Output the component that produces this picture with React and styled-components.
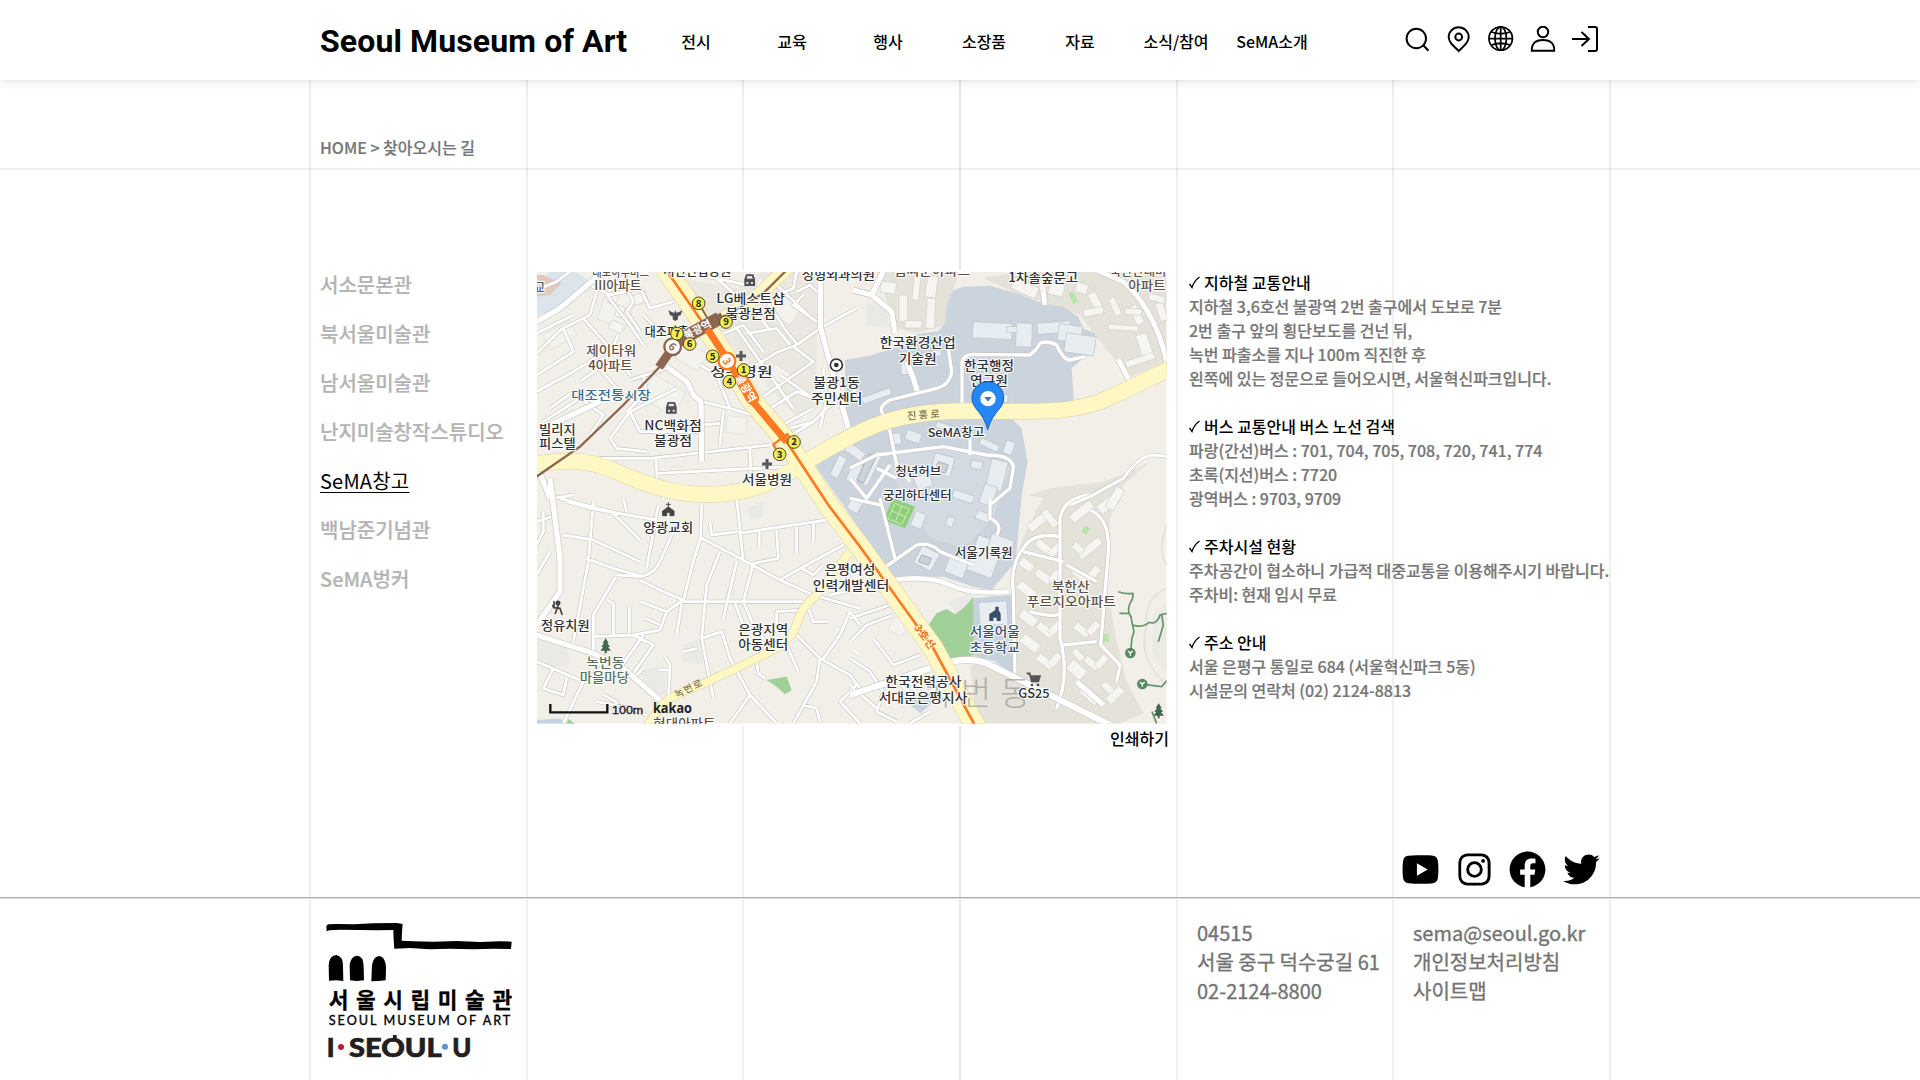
import React from "react";
import styled, { createGlobalStyle } from "styled-components";
import { RiYoutubeFill, RiFacebookCircleFill, RiTwitterFill } from "react-icons/ri";
import { BiLogoInstagram } from "react-icons/bi";

const kr = `"Noto Sans CJK KR", "Noto Sans", sans-serif`;

const GlobalStyle = createGlobalStyle`
  *, *::before, *::after { box-sizing: border-box; }
  body { margin: 0; background: #fff; font-family: ${kr}; font-weight: 500; color: #000; }
  ul, p, h1, h2 { margin: 0; padding: 0; list-style: none; font-weight: inherit; }
  a { color: inherit; text-decoration: none; }
`;

const rule = (c) => `linear-gradient(${c}, ${c})`;
const offsets = [0, 217, 433, 650, 867, 1083, 1300];

const Page = styled.div`
  display: flex;
  flex-direction: column;
  width: 100%;
  height: 1080px;
  overflow: hidden;
  background-image: ${offsets.map((o) => rule(o === 650 ? "#e6e6e6" : "#efefef")).join(",")};
  background-size: 2px 100%;
  background-repeat: no-repeat;
  background-position: ${offsets.map((o) => `calc(50vw - 651px + ${o}px) 0`).join(",")};
`;

const Container = styled.div`
  display: flex;
  width: 1300px;
  margin: 0 auto;
`;

const Header = styled.header`
  height: 80px;
  flex: none;
  background: #fff;
  box-shadow: 0 0 10px rgba(0, 0, 0, 0.16);
`;

const HeaderInner = styled(Container)`
  height: 80px;
  padding: 0 11px 0 10px;
  align-items: center;
`;

const Brand = styled.h1`
  width: 328px;
  padding-top: 2px;
  font: 700 32px/40px Roboto, sans-serif;
  letter-spacing: 0.12px;
  white-space: nowrap;
`;

const Nav = styled.nav`
  display: grid;
  grid-template-columns: repeat(7, 96px);
  padding-top: 1px;
`;

const NavLink = styled.a`
  text-align: center;
  font-size: 16px;
  line-height: 24px;
  white-space: nowrap;
`;

const Tools = styled.div`
  display: flex;
  gap: 14px;
  margin-left: auto;
  align-items: center;
`;

const ToolIcon = styled.svg`
  display: block;
  width: 28px;
  height: 28px;
  fill: none;
  stroke: #000;
  stroke-width: ${(p) => p.$line || 2};
`;

const CrumbBar = styled.div`
  flex: none;
  height: 90px;
  border-bottom: 2px solid rgba(0, 0, 0, 0.063);
`;

const Crumb = styled(Container)`
  padding: 55px 10px 0;
  font-size: 16px;
  line-height: 24px;
  color: #777;
  -webkit-text-stroke: 0.2px #777;
`;

const Main = styled(Container)`
  flex: none;
  height: 727px;
  padding-top: 100px;
`;

const SideList = styled.ul`
  flex: none;
  width: 227px;
  padding-left: 10px;
`;

const SideItem = styled.li`
  height: 49px;
  font-size: 20px;
  line-height: 30px;
  white-space: nowrap;
  color: ${(p) => (p.$active ? "#000" : "#b4b4b4")};
  font-weight: ${(p) => (p.$active ? 400 : 500)};
  letter-spacing: ${(p) => (p.$active ? "0.2px" : "0")};
  -webkit-text-stroke: ${(p) => (p.$active ? "0" : "0.2px #b4b4b4")};
  text-decoration: ${(p) => (p.$active ? "underline" : "none")};
  text-decoration-thickness: 1px;
  text-underline-offset: 3px;
`;

const MapColumn = styled.div`
  display: flex;
  flex: none;
  flex-direction: column;
  width: 632px;
`;

const MapImage = styled.svg`
  display: block;
  width: 631px;
  height: 456px;
  background: #fff;
`;

const PrintLink = styled.a`
  align-self: flex-end;
  font-size: 16px;
  line-height: 24px;
`;

const Info = styled.div`
  display: flex;
  flex-direction: column;
  gap: 24px;
  padding-left: 20px;
  font-size: 16px;
  line-height: 24px;
  white-space: nowrap;
  color: #777;
`;

const InfoLine = styled.p`
  -webkit-text-stroke: 0.2px #777;
`;

const InfoTitle = styled.h2`
  display: flex;
  align-items: center;
  font-size: 16px;
  color: #000;
`;

const Tick = styled.svg`
  width: 11px;
  height: 13px;
  margin-right: 4px;
  fill: none;
  stroke: #000;
  stroke-width: 1.3;
`;

const SocialRow = styled(Container)`
  margin-top: -51px;
  height: 51px;
  flex: none;
  justify-content: flex-end;
  align-items: center;
  gap: 10.7px;
  padding: 0 7px 5px 0;
`;

const Footer = styled.footer`
  flex: 1;
  border-top: 1px solid #a9a9a9;
  box-shadow: inset 0 1px 0 #e2e2e2;
`;

const FooterInner = styled(Container)`
  padding-top: 20px;
`;

const LogoCell = styled.div`
  flex: none;
  width: 887px;
  padding: 2px 0 0 15px;
`;

const Logo = styled.svg`
  display: block;
  width: 190px;
  height: 140px;
`;

const FooterText = styled.div`
  flex: none;
  width: 216px;
  font-size: 20px;
  font-weight: 400;
  line-height: 29px;
  color: #747474;
  -webkit-text-stroke: 0.35px #747474;
  white-space: nowrap;
`;

/* ---------- map ---------- */

const AREA = {
  base: "#f2efe9",
  campus: "#cbd4dc",
  estate: "#e4e2d9",
  tower: "#f6f5f1",
  hall: "#e8edf2",
};

function Roads({ d, w = 9, edge = 3.5 }) {
  return (
    <g fill="none" strokeLinejoin="round">
      <path d={d} stroke="#c6c4c1" strokeWidth={w + edge} />
      <path d={d} stroke="#fff" strokeWidth={w} />
    </g>
  );
}

function YellowRoad({ d, w }) {
  return (
    <g fill="none">
      <path d={d} stroke="#d9cfa0" strokeWidth={w + 3} />
      <path d={d} stroke="#fff8c4" strokeWidth={w} />
    </g>
  );
}

const narrowRoads = `
M20 75L80 50L120 20 M20 265L95 192L180 150L200 80 M20 205L70 180L130 150 M100 190L130 260L20 330 M20 380L130 320L260 240
M230 90L300 180L340 240 M160 160L240 250L300 330 M180 60L240 90L330 70L360 130L430 110 M340 150L400 210 M300 345L410 310 M210 20L250 60L300 20
M285 60L310 110L290 140L330 200 M265 210L220 300L150 350 M60 430L130 380L190 410L290 380 M200 300L260 370 M290 440L350 380L340 330
M240 520L300 440L330 500L510 500 M515 410L600 430L685 455 M600 430L580 380L560 330L510 300 M580 440L570 540 M515 480L570 475 M240 520L260 550L350 560
M120 600L210 580L360 580L720 540 M378 580L382 655 M660 548L662 625 M385 625L520 618L780 605 M300 440L440 370 M40 650L70 700L130 690 M40 470L150 400L220 450L180 510
M750 530L850 470L890 430L985 370 M690 450L800 380L880 410 M650 320L740 262L800 240 M800 240L870 190L980 130 M780 240L740 190L650 205 M790 245L850 290L700 395
M690 75L770 200L800 235 M740 60L850 165 M640 100L720 195 M800 80L840 60L870 90 M570 210L640 180L700 260 M620 190L790 430 M820 90L790 120L860 170 M880 310L890 400L870 490
M750 330L850 400 M450 20L560 40L650 60L670 20 M560 40L640 110 M800 20L790 70L740 90 M720 500L850 430 M780 490L850 470
M20 770L80 750 M110 710L180 730L380 765 M100 810L190 825L330 890 M190 710L175 890 M90 700L260 745 M280 700L290 740 M240 735L330 825 M170 880L250 910L340 935
M385 720L350 910 M425 810L390 890Q370 930 330 935L260 930 M20 840L40 800L40 740 M20 930L60 860 M175 890L130 1130 M258 935L190 1050L190 1160 M230 1005L250 1015L250 1110
M298 1025L298 1105 M190 1115L310 1110L390 1095L410 1040L460 1005 M330 945L400 980L460 1005 M330 1010L410 1040 M345 1060L390 1080 M310 1110L370 1140L300 1240 M340 1110L270 1210
M515 720L512 820Q490 880 460 1010 M515 820L630 880L750 945L850 990L990 1030 M620 700L640 890 M625 805L890 765 M740 795L745 880L670 895 M688 800L688 845 M800 785L800 865 M850 775L850 830
M540 770L545 810L625 800 M750 945L820 905L940 840 M815 910L850 930L880 900 M460 1010L820 1010 M570 860L530 960L515 1120L550 1300 M620 890L580 1060 M670 895L640 1010L670 1080L700 1120
M455 1015L440 1110 M615 1015L640 1080 M515 1120L575 1100L600 1180L660 1290L740 1375 M460 1160L500 1150 M740 1100L740 1040L820 1035 M835 1030L850 1070L895 1070 M770 1140L805 1220
M680 1190L685 1225L705 1240 M800 1110L870 1180L960 1230L990 1270 M870 1180L860 1250L790 1375 M660 1290L600 1375 M960 1040L930 1110L880 1180 M960 1040L990 1080 M900 990L990 970 M970 1155L990 1170
M820 1320L860 1330L870 1370 M980 1260L930 1310L990 1375 M20 1190L160 1250L100 1375 M70 1210L40 1270L100 1290L110 1240 M160 1250L240 1190L310 1240L400 1310 M290 1210L310 1240
M405 1175L420 1200L415 1300 M385 1215L420 1215 M310 1240L340 1210 M200 1310L300 1330L350 1350 M220 1290L260 1310L250 1350
M960 1060L1080 1020L1120 1010 M960 1130L1010 1080L1090 1050 M1030 1120L1090 1200L1170 1170 M960 1180L1020 1220L1060 1280L1040 1340L1100 1370
M1200 1340L1140 1375 M960 1260L1040 1330 M1100 1250L1160 1300L1240 1260`;

const wideRoads = `
M20 170L90 130L220 20 M410 305L470 350L490 390L513 410L515 590 M20 500L210 410
M870 20L872 190L905 310L955 490 M970 75L1025 90L1085 140L1095 205 M1025 90L1060 20
M60 640L90 880L90 980L20 1080 M20 600L60 700 M20 1110L190 1165L280 1210L400 1315
M1130 290L1150 340L1165 390 M1640 1250L1720 1320`;

const campusRoads = `
M1255 250L1265 320Q1260 360 1220 370L1080 405Q1050 420 1055 440L1080 500L1100 600L1140 650 M1296 425L1296 290Q1300 270 1330 268L1500 270Q1520 255 1530 235Q1550 225 1580 240Q1600 285 1620 285L1665 275
M960 610L1040 570L1240 545L1370 570Q1450 570 1450 610L1440 670L1380 720 M1080 600L1010 700L960 640 M1320 500L1320 570 M1100 640L1040 610 M1050 700L1095 880 M960 700L1050 720
M1060 910L1160 840Q1200 830 1230 860L1330 900 M1380 700L1380 760Q1420 780 1400 810`;

const estateRoads = `
M1580 1330Q1620 1230 1590 1120L1590 760Q1600 700 1680 690 M1590 815Q1510 800 1480 850Q1440 900 1450 980L1455 1230 M1680 735Q1740 760 1735 860L1712 1140L1770 1200L1760 1250
M1500 1040Q1570 1060 1590 1045 M1600 1140L1700 1130 M1480 860L1600 890 M1610 900L1700 950`;

const towers = [
  [1525, 770, 70, 26, -38], [1560, 760, 60, 22, 50], [1655, 740, 78, 28, -38], [1735, 715, 70, 30, -38], [1540, 845, 50, 24, 38], [1575, 855, 45, 22, -45],
  [1680, 850, 80, 24, -38], [1645, 850, 36, 22, 40], [1490, 900, 44, 26, 38], [1540, 935, 52, 24, 38], [1575, 935, 40, 24, -48], [1490, 975, 60, 28, 38],
  [1650, 930, 50, 24, 38], [1690, 925, 46, 24, -50], [1495, 1060, 56, 30, 38], [1545, 1095, 54, 24, 38], [1575, 1090, 44, 22, -48], [1500, 1135, 60, 30, 38],
  [1545, 1190, 54, 24, 38], [1575, 1185, 44, 22, -48], [1655, 1095, 50, 24, 38], [1690, 1090, 44, 22, -48], [1640, 1215, 56, 36, 42], [1645, 1170, 40, 20, 50],
  [1685, 1195, 50, 22, 38], [1715, 1190, 44, 22, -48], [1680, 1290, 64, 30, 42], [1735, 1270, 44, 20, 42], [1755, 1290, 56, 26, -45],
  [1075, 68, 46, 34, 8], [1120, 130, 26, 80, 0], [1205, 65, 32, 65, 8], [1160, 60, 20, 90, 5], [1202, 145, 26, 90, 3], [1150, 178, 50, 22, 0], [1485, 70, 80, 34, 24],
  [1540, 80, 20, 70, -8], [1580, 70, 46, 44, 12], [1655, 70, 36, 30, 15], [1700, 115, 26, 70, -28], [1690, 140, 60, 22, -10], [1755, 125, 20, 56, -24], [1780, 188, 90, 16, 4],
  [1820, 150, 24, 60, -26], [1810, 140, 50, 18, 5], [1845, 245, 34, 80, -18], [1830, 285, 90, 20, -18], [1895, 140, 24, 56, -20], [1880, 100, 50, 20, 15], [1755, 700, 28, 70, 30],
  [250, 100, 24, 34, 20], [270, 140, 24, 34, 20], [260, 185, 40, 28, 25], [330, 100, 44, 30, -20],
];

const halls = [
  [1387, 197, 118, 48, 3], [1482, 210, 48, 72, 2], [1446, 194, 30, 18, 0], [1572, 188, 100, 34, -4], [1620, 205, 70, 50, 8], [1650, 238, 90, 58, 8], [1040, 393, 90, 20, -20], [1128, 308, 30, 40, 0],
  [1220, 265, 30, 16, 0], [1425, 400, 18, 24, 0], [975, 560, 60, 28, 35], [1025, 610, 22, 110, 26], [975, 625, 34, 60, 26], [1095, 522, 36, 34, -8], [1150, 515, 46, 30, 20], [1250, 488, 66, 18, 18],
  [1378, 540, 60, 20, 25], [1437, 548, 28, 40, 20], [1238, 600, 60, 60, 14], [1180, 650, 50, 40, -20], [1400, 630, 50, 90, 14], [1340, 600, 34, 24, 10], [1300, 695, 64, 24, 18], [1375, 690, 40, 60, 18],
  [1165, 765, 34, 46, 22], [1260, 770, 22, 28, 20], [1360, 755, 44, 26, 22], [1190, 880, 58, 58, 28], [1280, 905, 60, 54, 22], [1365, 875, 80, 110, 20], [1410, 845, 70, 60, 20], [1390, 1045, 84, 70, -3],
  [925, 605, 26, 66, 25], [975, 720, 36, 40, 30], [935, 545, 26, 22, 25],
];

const blocks = [
  [260, 130, 90, 100, 20], [480, 270, 90, 60, 30], [400, 390, 110, 80, 30], [620, 480, 60, 50, 5], [760, 130, 90, 60, 35], [440, 615, 36, 18, -5], [600, 990, 20, 32, 15], [1105, 1085, 46, 44, 35],
  [700, 60, 40, 30, 20], [750, 330, 60, 40, 35], [90, 210, 90, 50, -30],
];

function Boxes({ items, fill, stroke }) {
  return (
    <g fill={fill} stroke={stroke} strokeWidth="2">
      {items.map(([x, y, w, h, r], i) => (
        <rect key={i} x={x - w / 2} y={y - h / 2} width={w} height={h} transform={`rotate(${r} ${x} ${y})`} />
      ))}
    </g>
  );
}

const mapLabels = [
  ["대로하우비드", 272, 32, 38, 170, "#5f5148"], ["III아파트", 264, 74, 38, 142, "#5f5148"], ["교", 28, 80, 38, 34, "#4d6684"],
  ["서안산립공원", 502, 30, 38, 204], ["LG베스트샵", 662, 115, 38, 206], ["불광본점", 662, 160, 38, 150], ["성형외과의원", 925, 42, 38, 220],
  ["대조파출소", 427, 212, 38, 166], ["제이타워", 244, 271, 38, 150, "#5f5148"], ["4아파트", 241, 316, 38, 132, "#5f5148"], ["대조전통시장", 243, 405, 36, 238, "#376e94"],
  ["성누병원", 634, 334, 38, 188], ["NC백화점", 429, 495, 38, 172], ["불광점", 429, 541, 38, 114], ["빌리지", 82, 506, 38, 110], ["피스텔", 82, 550, 38, 110], ["서울병원", 711, 658, 38, 150],
  ["불광1동", 920, 366, 38, 140], ["주민센터", 920, 415, 38, 154], ["한국환경산업", 1163, 247, 38, 228], ["기술원", 1163, 293, 38, 114], ["한국행정", 1377, 315, 38, 150], ["연구원", 1377, 361, 38, 114],
  ["힘찌문아파트", 1206, 31, 38, 230, "#5f5148"], ["1차솔숲문고", 1540, 50, 38, 210], ["북한산래미", 1824, 31, 38, 170, "#5f5148"], ["아파트", 1851, 76, 38, 112, "#5f5148"],
  ["SeMA창고", 1278, 517, 36, 170], ["청년허브", 1165, 634, 36, 138], ["궁리하다센터", 1162, 706, 36, 206], ["양광교회", 415, 800, 38, 150],
  ["은평여성", 960, 927, 38, 152], ["인력개발센터", 963, 974, 38, 230], ["정유치원", 106, 1096, 38, 146], ["녹번동", 226, 1205, 38, 114, "#57735f"], ["마을마당", 223, 1252, 38, 148, "#57735f"],
  ["은광지역", 700, 1107, 38, 150], ["아동센터", 700, 1153, 38, 150], ["현대아파트", 463, 1389, 38, 186, "#5f5148"], ["서울기록원", 1361, 876, 38, 174],
  ["북한산", 1622, 978, 38, 114, "#5f5148"], ["푸르지오아파트", 1624, 1024, 38, 268, "#5f5148"], ["서울어울", 1394, 1114, 38, 150, "#38506d"], ["초등학교", 1394, 1160, 38, 150, "#38506d"],
  ["한국전력공사", 1180, 1263, 38, 228], ["서대문은평지사", 1179, 1310, 38, 266], ["GS25", 1512, 1300, 38, 94],
];

const exits = [[1, 641, 315], [2, 792, 531], [3, 749, 568], [4, 598, 350], [5, 548, 274], [6, 479, 237], [7, 441, 206], [8, 506, 115], [9, 588, 171]];

const line3 = "M405 10L530 190L590 280L660 400L770 530L895 720L990 845L1080 970L1210 1150L1345 1400";
const line6 = "M780 5L700 85L610 140L540 175L430 245L385 310L280 420L150 545L15 638";

function MapLabel({ item: [text, x, y, size, width, color = "#303235"] }) {
  return (
    <text x={x - width / 2} y={y} fontSize={size} textLength={width} lengthAdjust="spacingAndGlyphs" fill={color}>
      {text}
    </text>
  );
}

function StoreBag({ x, y }) {
  return (
    <g transform={`translate(${x} ${y})`}>
      <path d="M-16 -2L-11 -17H11L16 -2V18H-16Z" fill="#4e5052" />
      <path d="M-10 6h6v6h-6zM4 6h6v6h-6zM-9 -4L-7 -12H7L9 -4Z" fill="#e6e4e0" />
    </g>
  );
}

function Tree({ x, y }) {
  return <path transform={`translate(${x} ${y})`} d="M0 -22L9 -8H5L13 4H7L16 15H3V23H-3V15H-16L-7 4H-13L-5 -8H-9Z" fill="#3f6650" />;
}

function AreaMap() {
  return (
    <MapImage viewBox="537 270 631 456" role="img">
      <defs>
        <clipPath id="mapFrame">
          <rect x="21" y="21" width="1889" height="1355" />
        </clipPath>
      </defs>
      <g transform="translate(530 265) scale(0.33333)">
        <g clipPath="url(#mapFrame)" fontFamily={kr}>
          <rect x="21" y="21" width="1889" height="1355" fill={AREA.base} />
          <path d="M20 60L60 20H140L190 60L90 140L20 150Z" fill="#dce5eb" />
          <path d="M40 30L95 55L60 90L20 95V30Z" fill="#dfc9bc" />
          <path d="M450 40L560 190L800 460L860 430L860 20H700L620 70Z" fill="#eae8e1" />
          <path d="M1040 20H1290L1270 70L1245 180L1160 205L1100 190Z" fill={AREA.estate} />
          <path d="M1360 40L1460 20H1910V290L1800 335L1710 230L1650 150L1540 110L1460 85Z" fill={AREA.estate} />
          <path d="M1495 690L1560 670L1720 650L1800 620L1860 590L1780 660L1740 760L1730 960L1760 1130L1790 1250L1840 1345L1760 1380L1500 1230L1450 1230V900Q1490 780 1540 700Z" fill={AREA.estate} />
          <path d="M1320 1200L1420 1190L1620 1290L1740 1376H1340Z" fill={AREA.estate} />
          <path d="M1910 970Q1840 1000 1850 1080Q1820 1180 1910 1260M1910 780Q1880 860 1910 900" fill="none" stroke="#e3e3dc" strokeWidth="6" />
          <path d="M1920 1010Q1850 1030 1870 1100Q1850 1180 1920 1230Z" fill="#eceae4" />
          <path d="M20 1120L110 1140L120 1200L60 1210L20 1190Z M330 1220L400 1200L410 1290L360 1290Z M460 1140L510 1120L520 1200L460 1190Z M650 730L700 710V760H660Z M1250 1010L1320 985L1340 1010L1280 1045Z M1010 120L1060 100L1080 190L1010 180Z" fill="#e9eae5" />
          <path d="M945 285L1020 272L1090 250L1160 208L1225 198L1245 175L1252 110L1270 75L1300 65L1380 62L1460 85L1540 115L1600 125L1645 155L1660 190L1695 205V250L1625 310L1632 410L1450 465L1475 490L1493 590L1475 690L1457 890L1385 975L1330 965L1240 935H1090L1040 870L960 750L855 600L950 500Z" fill={AREA.campus} />
          <path d="M1090 560L1240 540L1370 580L1440 610L1390 760L1300 850L1200 820L1080 620Z" fill="#d3dae1" />
          <path d="M1330 1000L1445 990L1450 1230L1400 1190L1325 1170Z M1130 1310L1220 1280L1200 1320L1170 1345Z M20 1366L90 1360L110 1376H20Z" fill="#c6d3de" />
          <path d="M1195 1080L1220 1045L1250 1032L1275 1048L1305 1025L1330 995V1170L1265 1190Z M710 1245L770 1235L785 1275L765 1288L740 1265Z M115 1362L135 1376H110Z" fill="#a0cf97" />
          <path d="M1088 700L1155 725L1125 790L1062 765Z" fill="#8fcf7c" />
          <path d="M1095 715L1138 732L1115 778L1075 762ZM1116 723L1096 770M1085 738L1126 755" fill="none" stroke="#c9e9bd" strokeWidth="3" />
          <path d="M1655 800L1665 782L1680 790L1668 810ZM1718 1108H1736V1132H1718ZM1615 85L1630 80L1645 110L1630 118Z" fill="#b8e3ab" />
          <Boxes items={blocks} fill="#f4f2ed" stroke="#dedbd5" />
          <Boxes items={towers} fill={AREA.tower} stroke="#d3d0c8" />
          <Boxes items={halls} fill={AREA.hall} stroke="#b9c2ca" />
          <path d="M1018 565L1040 572L1000 655L980 645ZM1225 590L1255 600L1245 625L1215 615ZM1175 870L1205 880L1195 900L1165 890Z" fill={AREA.campus} stroke="#a8b1b8" strokeWidth="3" />
          <Roads d={narrowRoads} w={8.5} />
          <Roads d={wideRoads} w={16} />
          <Roads d={campusRoads} w={10} />
          <Roads d={estateRoads} w={10} />
          <Roads d="M1090 945Q1200 930 1260 960Q1320 990 1435 980" w={14} />
          <Roads d="M1220 1205Q1300 1170 1370 1195Q1460 1240 1560 1290Q1660 1340 1740 1380M960 1290L1080 1250L1200 1210" w={19} />
          <Roads d="M1620 720L1680 695L1780 640Q1830 570 1870 570L1920 575" w={9} />
          <Roads d="M1700 15L1780 50Q1860 120 1900 250L1910 290M1765 283L1800 350M1540 80L1545 120" w={15} />
          <YellowRoad w={23} d="M345 1390L400 1315Q430 1290 500 1265L640 1200L720 1160Q780 1130 800 1080Q810 1030 860 990L960 860" />
          <YellowRoad w={40} d="M790 -10L700 78Q620 145 540 180" />
          <YellowRoad w={46} d="M10 598C100 585 160 580 240 612C360 665 460 702 600 684C740 665 800 602 900 548C980 505 1080 438 1300 438C1480 438 1600 450 1710 410C1790 375 1850 345 1930 305" />
          <YellowRoad w={60} d={line3} />
          <path d="M10 598C100 585 160 580 240 612C360 665 460 702 600 684C740 665 800 602 900 548L930 532" fill="none" stroke="#fff8c4" strokeWidth="45" />
          <path d={line6} fill="none" stroke="#8b6752" strokeWidth="7" />
          <path d={line3} fill="none" stroke="#ff7a22" strokeWidth="8" />
          <text x="1175" y="1320" fontSize="98" fontWeight="300" fill="#8c8c8c" opacity="0.6" textLength="326">녹번동</text>
          <g stroke="#fff" strokeOpacity="0.85" strokeWidth="7" paintOrder="stroke" strokeLinejoin="round" fontWeight="500">
            {mapLabels.map((item, i) => (
              <MapLabel key={i} item={item} />
            ))}
          </g>
          <path d="M578 155L540 175L430 245L387 307" fill="none" stroke="#8b6752" strokeWidth="26" />
          <path d="M480 208L568 160" fill="none" stroke="#8b6752" strokeWidth="40" />
          <path d="M506 115L545 180" stroke="#8b6752" strokeWidth="6" />
          <path d="M532 192L590 280L660 400L770 530" fill="none" stroke="#ff7a22" strokeWidth="21" />
          <path d="M775 505L730 538L742 562M770 510L792 525" fill="none" stroke="#ff7a22" strokeWidth="7" />
          <path d="M628 330L668 400" stroke="#ff7a22" strokeWidth="40" strokeLinecap="round" />
          <text transform="translate(468 224) rotate(-27)" fontSize="32" fontWeight="700" fill="#fff" stroke="#8b6752" strokeWidth="5" paintOrder="stroke">불광역</text>
          <text transform="translate(615 336) rotate(60)" fontSize="33" fontWeight="700" fill="#fff">불광역</text>
          <circle cx="428" cy="245" r="25" fill="#fff" stroke="#8b6752" strokeWidth="7" />
          <text x="418" y="257" fontSize="32" fontWeight="700" fill="#8b6752" transform="rotate(40 428 245)">6</text>
          <circle cx="591" cy="288" r="25" fill="#fff" stroke="#ff7a22" strokeWidth="7" />
          <text x="582" y="300" fontSize="32" fontWeight="700" fill="#ff7a22" transform="rotate(60 591 288)">3</text>
          <text transform="translate(1132 464) rotate(-4)" fontSize="31" fill="#7b7255" textLength="98">진흥로</text>
          <text transform="translate(440 1300) rotate(-26)" fontSize="29" fill="#7b7255" textLength="88">녹번로</text>
          <text transform="translate(1151 1088) rotate(54)" fontSize="31" fontWeight="700" fill="#ee6a1a" stroke="#fff8c4" strokeWidth="5" paintOrder="stroke" textLength="82">3호선</text>
          <StoreBag x={659} y={45} />
          <StoreBag x={424} y={428} />
          <path d="M633 258V288M618 273H648M711 582V612M696 597H726" stroke="#55585c" strokeWidth="9" />
          <path d="M415 135q15 10 18 8l3 -8 3 8q8 0 18 -8l-5 16 -8 2v10l-8 5 -8 -5v-10l-8 -2z" fill="#4e5052" />
          <circle cx="919" cy="300" r="18" fill="#fff" stroke="#303235" strokeWidth="5" />
          <circle cx="919" cy="300" r="7" fill="#303235" />
          <path d="M415 712V730M408 718H422M398 752V738L415 726L432 738V752H420V742H410V752Z" fill="#444" stroke="#444" strokeWidth="3" />
          <path d="M1378 1068V1047L1396 1035V1025H1406V1035L1412 1046V1068H1400V1058H1390V1068Z" fill="#38506d" />
          <g fill="#444" stroke="#444" strokeWidth="5" strokeLinecap="round">
            <circle cx="84" cy="1014" r="5" />
            <path d="M72 1010V1028L90 1030L96 1048M84 1022L76 1045M72 1028L68 1022" fill="none" />
          </g>
          <path d="M1490 1225h9l6 24h20l5 -16h-28" fill="#555" stroke="#555" strokeWidth="5" />
          <circle cx="1506" cy="1260" r="4" fill="#444" />
          <circle cx="1524" cy="1260" r="4" fill="#444" />
          <Tree x={227} y={1142} />
          <Tree x={1886} y={1337} />
          <path d="M1765 980Q1785 988 1808 985Q1812 1000 1800 1015Q1790 1040 1803 1055Q1806 1075 1812 1100Q1800 1130 1805 1160M1768 1045H1798M1808 1080Q1835 1090 1858 1072Q1880 1080 1890 1050L1912 1045M1895 1050L1900 1080L1885 1130M1840 1258L1895 1265L1912 1245M1866 1340L1880 1376" fill="none" stroke="#63946c" strokeWidth="5" />
          {[[1801, 1164], [1837, 1257]].map(([x, y]) => (
            <g key={x}>
              <circle cx={x} cy={y} r="16" fill="#568b61" />
              <path d={`M${x - 7} ${y - 6}L${x} ${y + 1}L${x + 7} ${y - 6}M${x} ${y + 1}V${y + 8}`} stroke="#fff" strokeWidth="4" fill="none" />
            </g>
          ))}
          {exits.map(([n, x, y]) => (
            <g key={n}>
              <circle cx={x} cy={y} r="19" fill="#f6ea52" stroke="#4b4420" strokeWidth="3" />
              <text x={x} y={y + 10} textAnchor="middle" fontSize="29" fontWeight="700" fill="#222">{n}</text>
            </g>
          ))}
          <path d="M1373 494Q1365 460 1336 428A48 48 0 1 1 1411 428Q1382 460 1373 494Z" fill="#2487f3" stroke="#1a62bd" strokeWidth="3" />
          <circle cx="1374" cy="401" r="23" fill="#fff" />
          <path d="M1363 396H1385L1374 410Z" fill="#2d7fd4" />
          <path d="M61 1317V1342H232V1317" fill="none" stroke="#111" strokeWidth="7" />
          <text x="246" y="1346" fontSize="30" fill="#222" stroke="#222" strokeWidth="1" textLength="94" lengthAdjust="spacingAndGlyphs" fontFamily="Liberation Sans, sans-serif">100m</text>
          <text x="369" y="1343" fontSize="40" fontWeight="700" fill="#222" textLength="117" lengthAdjust="spacingAndGlyphs" fontFamily="Open Sans, sans-serif">kakao</text>
        </g>
      </g>
    </MapImage>
  );
}

/* ---------- content ---------- */

const navItems = ["전시", "교육", "행사", "소장품", "자료", "소식/참여", "SeMA소개"];
const sideItems = ["서소문본관", "북서울미술관", "남서울미술관", "난지미술창작스튜디오", "SeMA창고", "백남준기념관", "SeMA벙커"];
const infoBlocks = [
  ["지하철 교통안내", "지하철 3,6호선 불광역 2번 출구에서 도보로 7분", "2번 출구 앞의 횡단보도를 건넌 뒤,", "녹번 파출소를 지나 100m 직진한 후", "왼쪽에 있는 정문으로 들어오시면, 서울혁신파크입니다."],
  ["버스 교통안내 버스 노선 검색", "파랑(간선)버스 : 701, 704, 705, 708, 720, 741, 774", "초록(지선)버스 : 7720", "광역버스 : 9703, 9709"],
  ["주차시설 현황", "주차공간이 협소하니 가급적 대중교통을 이용해주시기 바랍니다.", "주차비: 현재 임시 무료"],
  ["주소 안내", "서울 은평구 통일로 684 (서울혁신파크 5동)", "시설문의 연락처 (02) 2124-8813"],
];

function HeaderTools() {
  return (
    <Tools>
      <ToolIcon viewBox="0 0 28 28"><circle cx="13.300" cy="12.500" r="9.700" /><path d="M20 19L25.500 24.700" /></ToolIcon>
      <ToolIcon viewBox="0 0 28 28"><path d="M13.700 25C8 19.500 3.700 16 3.700 11a10 9.700 0 0 1 20 0C23.700 16 19.500 19.500 13.700 25Z" /><circle cx="13.700" cy="11" r="3.400" /></ToolIcon>
      <ToolIcon viewBox="0 0 28 28" $line={1.75}><circle cx="13.700" cy="12.500" r="11.700" /><ellipse cx="13.700" cy="12.500" rx="5.700" ry="11.700" /><path d="M13.700 1V24M2 12.500H25.500M4.500 6Q13.700 9.500 23 6M4.500 19Q13.700 15.500 23 19" /></ToolIcon>
      <ToolIcon viewBox="0 0 28 28"><circle cx="14" cy="6" r="5.200" /><path d="M2.800 24.800C2.500 18 6 14 14 14S25.500 18 25.200 24.800Z" /></ToolIcon>
      <ToolIcon viewBox="0 0 28 28"><path d="M1 13H18.500M10.500 6L18 13L10.500 20M17 1H24Q26 1 26 3V23Q26 25 24 25H17" /></ToolIcon>
    </Tools>
  );
}

function MuseumLogo() {
  return (
    <Logo viewBox="75 90 570 420">
      <path d="M80 124L79 108L84 103L110 102L160 103L220 100L290 99L308 102L306 125L305 152L340 154L400 155L470 153L540 156L600 154L635 155L633 177L580 176L520 178L450 176L390 178L330 174L283 176L281 150L280 120L230 121L180 120L120 119L88 121Z" />
      <path d="M87 272L86 225Q88 197 109 195Q130 199 129 230L130 273L108 271ZM150 271L149 225Q152 199 171 197Q190 197 191 230L192 271L170 273ZM214 274L216 225Q220 199 238 198Q256 200 258 232L257 271L236 273Z" />
      <text x="86" y="354" fontFamily={kr} fontWeight="700" stroke="#000" strokeWidth="1" fontSize="64" textLength="550" lengthAdjust="spacing">서울시립미술관</text>
      <text x="86" y="406" fontFamily="Lato, sans-serif" fontWeight="400" stroke="#000" strokeWidth="1" fontSize="38" textLength="545" lengthAdjust="spacing">SEOUL MUSEUM OF ART</text>
      <g fontFamily="Lato, sans-serif" fontWeight="900" fontSize="77" fill="#231f20" stroke="#231f20" strokeWidth="2">
        <text x="80" y="500">I</text>
        <text x="147" y="500" textLength="278" lengthAdjust="spacingAndGlyphs">SEOUL</text>
        <text x="457" y="500">U</text>
      </g>
      <rect x="279" y="435" width="11" height="14" fill="#231f20" />
      <circle cx="123" cy="471" r="9" fill="#b0213c" />
      <circle cx="435" cy="470" r="9" fill="#5f92c8" />
    </Logo>
  );
}

export default function App() {
  return (
    <>
      <GlobalStyle />
      <Page>
        <Header>
          <HeaderInner>
            <Brand>Seoul Museum of Art</Brand>
            <Nav>
              {navItems.map((n) => (
                <NavLink key={n}>{n}</NavLink>
              ))}
            </Nav>
            <HeaderTools />
          </HeaderInner>
        </Header>
        <CrumbBar>
          <Crumb>HOME &gt; 찾아오시는 길</Crumb>
        </CrumbBar>
        <Main>
          <SideList>
            {sideItems.map((s) => (
              <SideItem key={s} $active={s === "SeMA창고"}>{s}</SideItem>
            ))}
          </SideList>
          <MapColumn>
            <AreaMap />
            <PrintLink>인쇄하기</PrintLink>
          </MapColumn>
          <Info>
            {infoBlocks.map(([title, ...lines]) => (
              <div key={title}>
                <InfoTitle>
                  <Tick viewBox="0 0 11 13"><path d="M0.500 8L3 11.500Q5 5 10.500 1" /></Tick>
                  {title}
                </InfoTitle>
                {lines.map((l) => (
                  <InfoLine key={l}>{l}</InfoLine>
                ))}
              </div>
            ))}
          </Info>
        </Main>
        <SocialRow>
          <RiYoutubeFill size={43} />
          <BiLogoInstagram size={43} />
          <RiFacebookCircleFill size={43} />
          <RiTwitterFill size={43} />
        </SocialRow>
        <Footer>
          <FooterInner>
            <LogoCell>
              <MuseumLogo />
            </LogoCell>
            <FooterText>
              <p>04515</p>
              <p>서울 중구 덕수궁길 61</p>
              <p>02-2124-8800</p>
            </FooterText>
            <FooterText>
              <p>sema@seoul.go.kr</p>
              <p>개인정보처리방침</p>
              <p>사이트맵</p>
            </FooterText>
          </FooterInner>
        </Footer>
      </Page>
    </>
  );
}
